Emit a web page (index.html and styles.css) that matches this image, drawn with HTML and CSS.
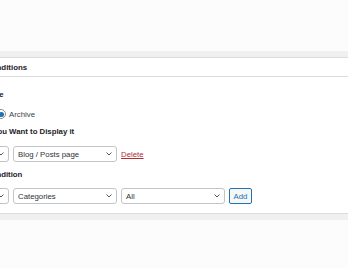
FILE: index.html
```html
<!DOCTYPE html>
<html>
<head>
    <title>Display Conditions</title>
    <link rel="stylesheet" href="styles.css">
</head>
<body>
    <div class="top-area"></div>
    <div class="band"></div>
    <div class="panel">
        <h2 class="panel-title">Conditions</h2>
        <div class="panel-body">
            <div class="field">
                <div class="label">Type</div>
                <div class="radios">
                    <span class="radio checked"></span>
                    <span class="radio-text">Archive</span>
                </div>
            </div>

            <div class="field">
                <div class="label">If You Want to Display it</div>
                <div class="row">
                    <div class="select select-cut">
                        <span class="select-text">Archive</span>
                        <svg class="chev" width="6" height="4" viewBox="0 0 6 4"><path d="M0.5 0.5 L3 3 L5.5 0.5" fill="none" stroke="#50575e" stroke-width="1"/></svg>
                    </div>
                    <div class="select">
                        <span class="select-text">Blog / Posts page</span>
                        <svg class="chev" width="6" height="4" viewBox="0 0 6 4"><path d="M0.5 0.5 L3 3 L5.5 0.5" fill="none" stroke="#50575e" stroke-width="1"/></svg>
                    </div>
                    <a href="#" class="delete">Delete</a>
                </div>
            </div>

            <div class="field field-last">
                <div class="label">Condition</div>
                <div class="row">
                    <div class="select select-cut">
                        <span class="select-text">Include</span>
                        <svg class="chev" width="6" height="4" viewBox="0 0 6 4"><path d="M0.5 0.5 L3 3 L5.5 0.5" fill="none" stroke="#50575e" stroke-width="1"/></svg>
                    </div>
                    <div class="select">
                        <span class="select-text">Categories</span>
                        <svg class="chev" width="6" height="4" viewBox="0 0 6 4"><path d="M0.5 0.5 L3 3 L5.5 0.5" fill="none" stroke="#50575e" stroke-width="1"/></svg>
                    </div>
                    <div class="select">
                        <span class="select-text">All</span>
                        <svg class="chev" width="6" height="4" viewBox="0 0 6 4"><path d="M0.5 0.5 L3 3 L5.5 0.5" fill="none" stroke="#50575e" stroke-width="1"/></svg>
                    </div>
                    <button type="button" class="btn-add">Add</button>
                </div>
            </div>
        </div>
    </div>
    <div class="band"></div>
    <div class="bottom-area"></div>
</body>
</html>
```

FILE: styles.css
```css
body {margin: 0; background: #fcfcfc; overflow: hidden; font-family: "Liberation Sans", Arial, sans-serif; font-size: 7.8px; color: #1d2327;}
.top-area {height: 51px;}
.band {height: 6px; background: #f0f0f1;}
.panel {margin-left: -27px; margin-right: -2px; background: #fff; border: 1px solid #dcdcde;}
.panel-title {margin: 0; height: 18px; line-height: 20px; padding-left: 12px; font-size: 7.9px; font-weight: bold; border-bottom: 1px solid #dcdcde;}
.panel-body {padding: 13px 12px 9px; display: flex; flex-direction: column; gap: 8px;}
.field {display: flex; flex-direction: column; gap: 9px;}
.field-last {gap: 8px;}
.label {font-weight: bold; line-height: 10px;}
.radios {display: flex; align-items: center; gap: 3px; height: 10px; margin-left: 10px; color: #3c434a;}
.radio {width: 8px; height: 8px; border: 1px solid #8c8f94; border-radius: 50%; display: flex; align-items: center; justify-content: center;}
.radio.checked::after {content: ""; width: 5px; height: 5px; border-radius: 50%; background: #2271b1;}
.row {display: flex; align-items: center; gap: 4px; height: 16px;}
.select {box-sizing: border-box; width: 104px; height: 16px; border: 1px solid #c3c4c7; border-radius: 3px; background: #fff; display: flex; align-items: center; justify-content: space-between; padding: 0 4px; color: #2c3338; overflow: hidden;}
.select-cut {width: 23px; justify-content: flex-end;}
.select-cut .select-text {display: none;}
.chev {flex: none;}
.delete {color: #b32d2e; text-decoration: underline;}
.btn-add {box-sizing: border-box; height: 16px; width: 23px; padding: 0; border: 1px solid #2271b1; border-radius: 2px; background: #f6f7f7; color: #2271b1; font-family: inherit; font-size: 7.8px;}
.bottom-area {height: 60px;}
```
